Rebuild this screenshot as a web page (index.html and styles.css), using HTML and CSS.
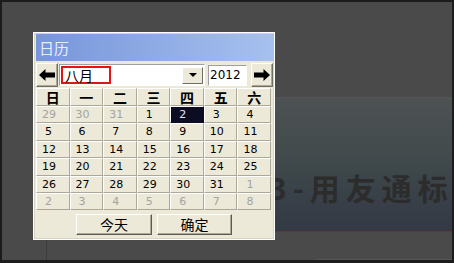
FILE: index.html
```html
<!DOCTYPE html>
<html lang="zh-CN">
<head>
    <meta charset="UTF-8">
    <title>日历</title>
    <link rel="stylesheet" href="styles.css">
</head>
<body>
    <div class="screen">
        <div class="page">
            <div class="banner">
                <span class="banner-text">3-用友通标</span>
            </div>
            <div class="below">
                <span class="below-field"></span>
            </div>
        </div>

        <div class="calendar">
            <div class="cal-title">日历</div>
            <div class="cal-bar">
                <button class="arrow-btn" id="prev">
                    <svg width="16" height="12" viewBox="0 0 16 12"><polygon points="0,6 6.5,0 6.5,3.5 16,3.5 16,8.5 6.5,8.5 6.5,12" fill="#000"/></svg>
                </button>
                <div class="month-select">
                    <span class="month-value">八月</span>
                    <span class="drop-btn">
                        <svg width="8" height="4" viewBox="0 0 8 4"><polygon points="0,0 8,0 4,4" fill="#000"/></svg>
                    </span>
                </div>
                <div class="year-box">2012</div>
                <button class="arrow-btn" id="next">
                    <svg width="16" height="12" viewBox="0 0 16 12"><polygon points="16,6 9.5,0 9.5,3.5 0,3.5 0,8.5 9.5,8.5 9.5,12" fill="#000"/></svg>
                </button>
            </div>
            <div class="cal-grid" id="grid">
                <div class="head">日</div>
                <div class="head">一</div>
                <div class="head">二</div>
                <div class="head">三</div>
                <div class="head">四</div>
                <div class="head">五</div>
                <div class="head">六</div>
            </div>
            <div class="cal-foot">
                <button class="foot-btn today">今天</button>
                <button class="foot-btn ok">确定</button>
            </div>
        </div>
    </div>
    <script>
        const grid = document.getElementById('grid');
        const year = 2012, month = 7, selected = 2;
        const first = new Date(year, month, 1).getDay();
        const daysIn = new Date(year, month + 1, 0).getDate();
        const prevDays = new Date(year, month, 0).getDate();

        for (let i = 0; i < 42; i++) {
            const cell = document.createElement('div');
            cell.className = 'day';
            let n = i - first + 1;
            if (n < 1) {
                n = prevDays + n;
                cell.classList.add('other');
            } else if (n > daysIn) {
                n = n - daysIn;
                cell.classList.add('other');
            } else if (n === selected) {
                cell.classList.add('selected');
            }
            if (n < 10) cell.classList.add('one');
            cell.textContent = n;
            grid.appendChild(cell);
        }
    </script>
</body>
</html>
```

FILE: styles.css
```css
body {
    margin: 0;
    background: #1c1c1c;
    font-family: "DejaVu Sans", "Noto Sans CJK SC", sans-serif;
}
.screen {
    position: relative;
    width: 454px;
    height: 263px;
    box-sizing: border-box;
    border: 2px solid #1c1c1c;
    border-bottom-width: 3px;
    background: #4a4a4a;
    overflow: hidden;
}
.page {
    margin: 95px 0 0 44px;
    height: 165px;
    border-left: 1px solid #3c3c3c;
    border-top: 1px solid #555;
    display: flex;
    flex-direction: column;
}
.banner {
    height: 134px;
    background: linear-gradient(to bottom, #4d5253 0%, #434b4d 40%, #3b4549 62%, #383f48 78%, #343a44 100%);
    border-bottom: 1px solid #5e3a3a;
    display: flex;
    align-items: center;
    padding-left: 222px;
    padding-top: 44px;
    box-sizing: border-box;
    white-space: nowrap;
}
.banner-text {
    font-family: "Noto Sans CJK SC", sans-serif;
    font-size: 30px;
    font-weight: bold;
    letter-spacing: 6px;
    color: #2c2c2c;
}
.below {
    flex: 1;
    display: flex;
    align-items: flex-end;
    justify-content: flex-end;
}
.below-field {
    width: 135px;
    height: 4px;
    background: #575757;
}

.calendar {
    position: absolute;
    left: 31px;
    top: 30px;
    width: 242px;
    height: 208px;
    box-sizing: border-box;
    border: 1px solid #fff;
    box-shadow: inset 0 0 0 1px #d8d4c4;
    background: #ece9d8;
    padding: 1px 0 1px 2px;
    display: flex;
    flex-direction: column;
}
.cal-title {
    height: 27px;
    background: linear-gradient(to right, #7795da, #a6c1ef);
    color: #e6eefb;
    font-family: "Noto Sans CJK SC", sans-serif;
    font-size: 15px;
    line-height: 27px;
    padding-left: 3px;
}
.cal-bar {
    height: 26px;
    margin-top: 1px;
    display: flex;
    align-items: center;
}
.arrow-btn {
    width: 22px;
    height: 24px;
    padding: 0;
    margin: 0;
    background: #ece9d8;
    border: 1px solid;
    border-color: #fff #716f64 #716f64 #fff;
    box-shadow: inset -1px -1px 0 #aca899;
    display: flex;
    align-items: center;
    justify-content: center;
}
#prev {
    margin-right: 1px;
}
#next {
    margin-left: 4px;
}
.month-select {
    width: 146px;
    height: 22px;
    box-sizing: border-box;
    background: #fff;
    border: 1px solid;
    border-color: #a0a0a0 #fff #fff #a0a0a0;
    display: flex;
    align-items: center;
    justify-content: space-between;
    padding: 0 1px;
}
.month-value {
    width: 50px;
    height: 18px;
    box-sizing: border-box;
    border: 2px solid #e41414;
    font-family: "Noto Sans CJK SC", sans-serif;
    font-size: 14px;
    line-height: 14px;
    padding-left: 2px;
    color: #000;
}
.drop-btn {
    width: 21px;
    height: 17px;
    box-sizing: border-box;
    background: #ece9d8;
    border: 1px solid;
    border-color: #fff #716f64 #716f64 #fff;
    display: flex;
    align-items: center;
    justify-content: center;
}
.year-box {
    width: 39px;
    height: 21px;
    margin-left: 3px;
    box-sizing: border-box;
    background: #fff;
    border: 1px solid;
    border-color: #a0a0a0 #fff #fff #a0a0a0;
    font-size: 12px;
    line-height: 19px;
    padding-left: 1px;
    color: #000;
}
.cal-grid {
    width: 235px;
    display: grid;
    grid-template-columns: repeat(7, 1fr);
    grid-template-rows: 18px repeat(6, 17.4px);
}
.head, .day {
    box-sizing: border-box;
    border: 1px solid;
    border-color: #fff #aca899 #aca899 #fff;
    color: #000;
}
.head {
    font-family: "Noto Sans CJK SC", sans-serif;
    font-weight: bold;
    font-size: 14px;
    line-height: 16px;
    text-align: center;
}
.day {
    font-size: 11px;
    line-height: 15px;
    padding-left: 5px;
}
.day.one {
    padding-left: 8px;
}
.day.other {
    color: #a3a3a3;
}
.day.selected {
    background: #0c0c22;
    color: #e4e4f0;
    border-color: #fff #0c0c22 #0c0c22 #fff;
}
.cal-foot {
    flex: 1;
    display: flex;
    justify-content: center;
    align-items: center;
    gap: 5px;
    padding-right: 2px;
}
.foot-btn {
    width: 76px;
    height: 21px;
    padding: 0;
    background: #ece9d8;
    border: 1px solid;
    border-color: #fff #5e5c52 #5e5c52 #fff;
    box-shadow: inset -1px -1px 0 #aca899;
    font-family: "Noto Sans CJK SC", sans-serif;
    font-size: 14px;
    line-height: 18px;
    color: #000;
}
.foot-btn.ok {
    width: 75px;
}
```
